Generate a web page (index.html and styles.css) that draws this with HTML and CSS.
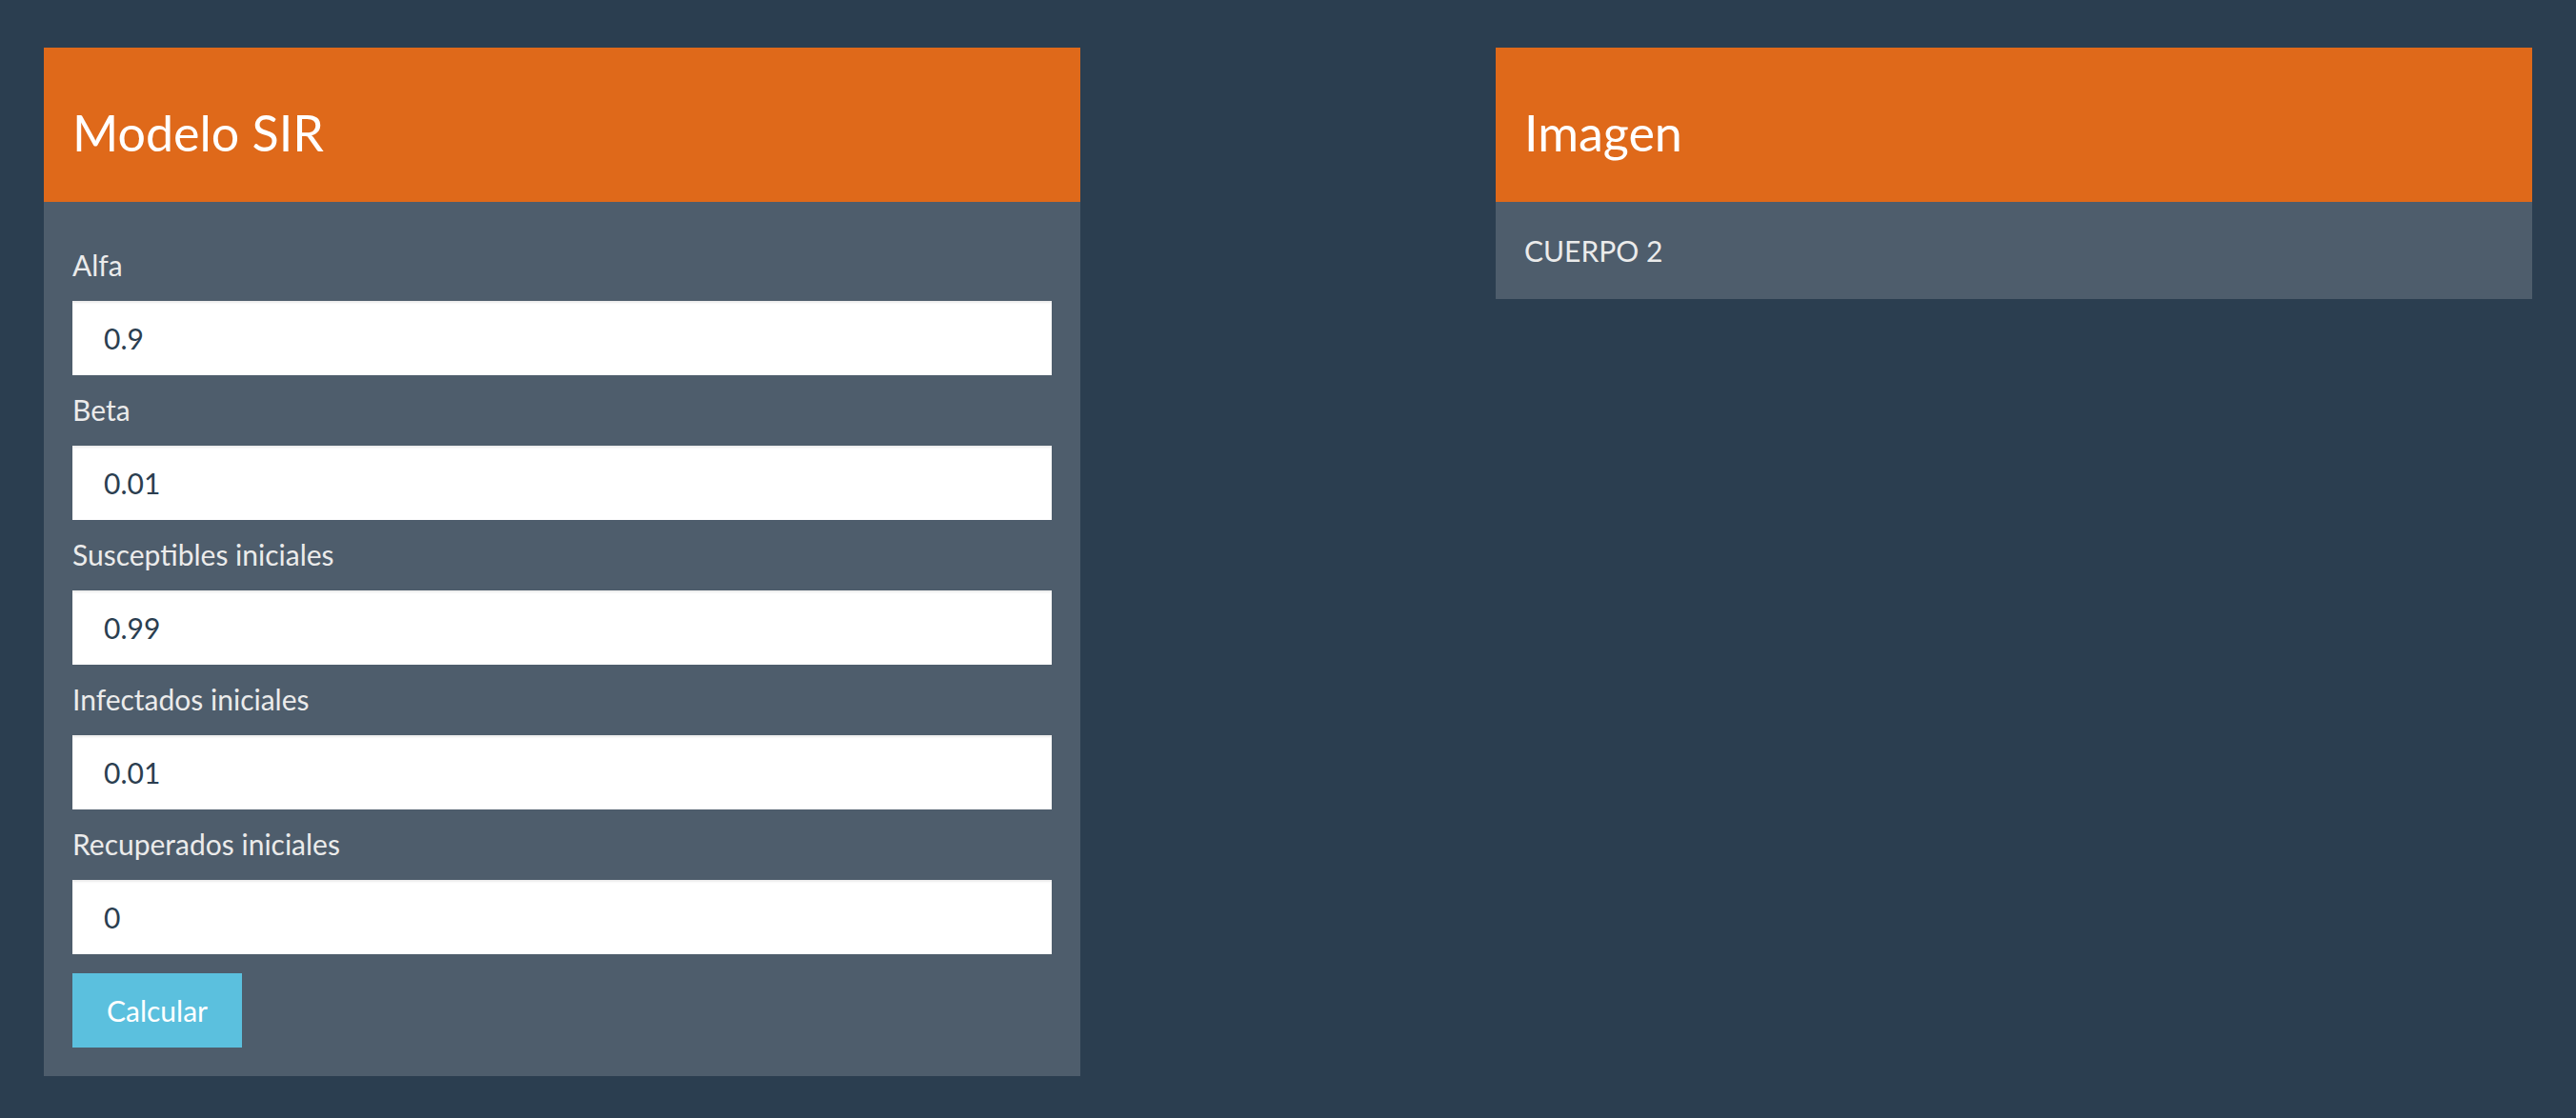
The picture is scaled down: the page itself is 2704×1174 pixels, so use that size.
FILE: index.html
```html
<!DOCTYPE html>
<html lang="es">
<head>
<meta charset="utf-8">
<title>Modelo SIR</title>
<link rel="stylesheet" href="styles.css">
</head>
<body>
<div class="page">
  <section class="panel">
    <div class="panel-heading"><h3 class="panel-title">Modelo SIR</h3></div>
    <div class="panel-body">
      <form class="form">
        <label class="field-label" for="alfa">Alfa</label>
        <input class="field-input" id="alfa" type="text" value="0.9">
        <label class="field-label" for="beta">Beta</label>
        <input class="field-input" id="beta" type="text" value="0.01">
        <label class="field-label" for="sus">Susceptibles iniciales</label>
        <input class="field-input" id="sus" type="text" value="0.99">
        <label class="field-label" for="inf">Infectados iniciales</label>
        <input class="field-input" id="inf" type="text" value="0.01">
        <label class="field-label" for="rec">Recuperados iniciales</label>
        <input class="field-input" id="rec" type="text" value="0">
        <button class="btn-info" type="button">Calcular</button>
      </form>
    </div>
  </section>
  <section class="panel">
    <div class="panel-heading"><h3 class="panel-title">Imagen</h3></div>
    <div class="panel-body panel-body-simple">CUERPO 2</div>
  </section>
</div>
</body>
</html>
```
FILE: styles.css
```css
html, body {
  margin: 0;
  padding: 0;
}
body {
  background: #2b3e50;
  font-family: Lato, "Open Sans", "Liberation Sans", sans-serif;
  color: #ebebeb;
}
.page {
  display: flex;
  justify-content: space-between;
  align-items: flex-start;
  padding: 50px 46px;
}
.panel {
  width: 1088px;
}
.panel-heading {
  background: #df691a;
  padding: 61px 30px 44px;
}
.panel-title {
  margin: 0;
  font-size: 52px;
  line-height: 57px;
  font-weight: 400;
  color: #ffffff;
}
.panel-body {
  background: #4e5d6c;
  padding: 45px 30px 30px;
  font-size: 30px;
  line-height: 42px;
}
.panel-body-simple {
  padding: 30px 30px;
}
.form {
  display: flex;
  flex-direction: column;
  align-items: flex-start;
}
.field-label {
  display: block;
  font-size: 30px;
  line-height: 42px;
  margin: 15px 0 17px;
  color: #ebebeb;
}
.field-label:first-child {
  margin-top: 0;
}
.field-input {
  display: block;
  width: 100%;
  height: 78px;
  box-sizing: border-box;
  border: 0;
  padding: 0 33px;
  margin: 0;
  background: #ffffff;
  box-shadow: inset 0 2px 2px rgba(0, 0, 0, 0.075);
  font-family: Lato, "Open Sans", "Liberation Sans", sans-serif;
  font-size: 30px;
  color: #2b3e50;
  outline: none;
}
.btn-info {
  margin-top: 20px;
  width: 178px;
  height: 78px;
  padding: 0;
  border: 0;
  text-align: center;
  background: #5bc0de;
  color: #ffffff;
  font-family: Lato, "Open Sans", "Liberation Sans", sans-serif;
  font-size: 30px;
  line-height: 42px;
}
```
